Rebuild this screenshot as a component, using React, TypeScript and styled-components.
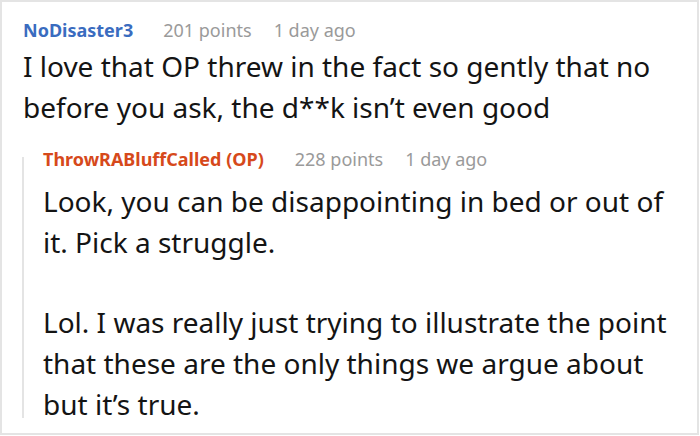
import React from 'react';
import styled, { createGlobalStyle } from 'styled-components';

const GlobalStyle = createGlobalStyle`
  html, body {
    margin: 0;
    padding: 0;
    background: #ffffff;
  }
  body {
    font-family: 'Noto Sans', 'Open Sans', sans-serif;
    color: #141414;
  }
`;

const Card = styled.section`
  box-sizing: border-box;
  width: 699px;
  height: 435px;
  border: 2px solid #e4e4e4;
  padding: 16px 0 0 21px;
`;

const Meta = styled.div`
  display: flex;
  align-items: baseline;
  height: 24px;
  line-height: 24px;
  font-size: 18px;
`;

const Author = styled.span<{ $op?: boolean }>`
  font-weight: 700;
  color: ${(p) => (p.$op ? '#d6491b' : '#3a6cbf')};
  margin-right: ${(p) => (p.$op ? '31px' : '30px')};
`;

const Info = styled.span`
  color: #9a9a9a;
  & + & {
    margin-left: 22px;
  }
`;

const Body = styled.p<{ $gap?: number }>`
  margin: ${(p) => p.$gap ?? 0}px 0 0;
  font-size: 28px;
  line-height: 41px;
`;

const Reply = styled.div`
  display: flex;
  margin: 19px 0 0 -1px;
`;

const Thread = styled.div`
  flex: 0 0 2px;
  margin: 10px 0 7px;
  background: #e4e4e4;
`;

const ReplyContent = styled.div`
  flex: 1;
  padding: 0 8px 0 19px;
`;

interface CommentProps {
  author: string;
  points: number;
  age: string;
  op?: boolean;
}

const CommentMeta = ({ author, points, age, op }: CommentProps) => (
  <Meta>
    <Author $op={op}>{author}</Author>
    <Info>{points} points</Info>
    <Info>{age}</Info>
  </Meta>
);

const App = () => {
  return (
    <>
      <GlobalStyle />
      <Card>
        <CommentMeta author="NoDisaster3" points={201} age="1 day ago" />
        <Body $gap={4}>
          I love that OP threw in the fact so gently that no before you ask, the d**k isn’t even good
        </Body>
        <Reply>
          <Thread />
          <ReplyContent>
            <CommentMeta author="ThrowRABluffCalled (OP)" points={228} age="1 day ago" op />
            <Body $gap={10}>Look, you can be disappointing in bed or out of it. Pick a struggle.</Body>
            <Body $gap={39}>
              Lol. I was really just trying to illustrate the point that these are the only things we argue
              about but it’s true.
            </Body>
          </ReplyContent>
        </Reply>
      </Card>
    </>
  );
};

export default App;
